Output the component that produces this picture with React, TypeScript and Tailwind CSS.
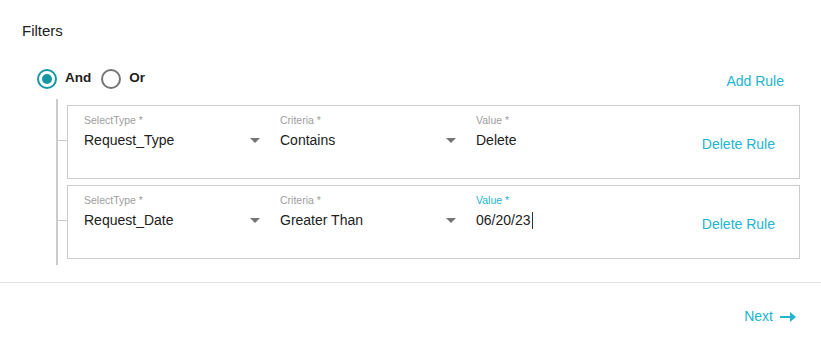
import { ReactNode } from "react";

const font = { fontFamily: '"Liberation Sans", Arial, sans-serif' };

function Radio({ checked, label }: { checked?: boolean; label: string }) {
  return (
    <label className="flex items-center gap-[8px]">
      <span
        className={`w-[20px] h-[20px] rounded-full border-2 flex items-center justify-center ${
          checked ? "border-[#1497a3]" : "border-[#757575]"
        }`}
      >
        {checked && <span className="w-[10px] h-[10px] rounded-full bg-[#1497a3]" />}
      </span>
      <span className="text-[13.5px] font-bold text-[#212121]">{label}</span>
    </label>
  );
}

function Field({
  label,
  value,
  select,
  focused,
  children,
}: {
  label: string;
  value: string;
  select?: boolean;
  focused?: boolean;
  children?: ReactNode;
}) {
  return (
    <div className="w-[176px] flex flex-col">
      <span className={`text-[10.5px] leading-[13px] ${focused ? "text-[#22b5cf]" : "text-[#9e9e9e]"}`}>
        {label}
      </span>
      <div className="mt-[3px] h-[20px] flex items-center justify-between">
        <span className="text-[14px] text-[#212121] flex items-center">
          {value}
          {children}
        </span>
        {select && (
          <span className="w-0 h-0 border-l-[5px] border-r-[5px] border-t-[5px] border-l-transparent border-r-transparent border-t-[#757575]" />
        )}
      </div>
    </div>
  );
}

function RuleCard({
  type,
  criteria,
  value,
  focused,
}: {
  type: string;
  criteria: string;
  value: string;
  focused?: boolean;
}) {
  return (
    <div className="relative h-[74px] border border-[#cccccc] flex pl-[16px] pr-[24px] pt-[8px]">
      <span className="absolute left-[-10px] top-[34px] w-[9px] h-[1px] bg-[#cccccc]" />
      <div className="flex gap-[20px]">
        <Field label="SelectType *" value={type} select />
        <Field label="Criteria *" value={criteria} select />
        <Field label="Value *" value={value} focused={focused}>
          {focused && <span className="ml-[1px] w-[1px] h-[17px] bg-[#333333]" />}
        </Field>
      </div>
      <button className="ml-auto mt-[20px] self-start text-[14px] text-[#22b5cf]">Delete Rule</button>
    </div>
  );
}

export default function App() {
  return (
    <div className="w-[821px] h-[346px] bg-white flex flex-col" style={font}>
      <div className="pl-[22px] pr-[21px]">
        <h2 className="pt-[22px] text-[15px] leading-[18px] text-[#212121]">Filters</h2>

        <div className="mt-[25px] pl-[15px] flex items-center">
          <div className="flex items-center gap-[10px]">
            <Radio checked label="And" />
            <Radio label="Or" />
          </div>
          <button className="ml-auto mr-[16px] mt-[6px] text-[14px] text-[#22b5cf]">Add Rule</button>
        </div>

        <div className="mt-[7px] ml-[34px] border-l-2 border-[#cccccc] pl-[9px] py-[6px] flex flex-col gap-[6px]">
          <RuleCard type="Request_Type" criteria="Contains" value="Delete" />
          <RuleCard type="Request_Date" criteria="Greater Than" value="06/20/23" focused />
        </div>
      </div>

      <div className="mt-[17px] border-t border-[#e0e0e0]" />

      <div className="flex justify-end pr-[25px] pt-[23px]">
        <button className="flex items-center gap-[7px] text-[14px] text-[#22b5cf]">
          Next
          <svg width="16" height="10" viewBox="0 0 16 10">
            <rect x="0" y="4" width="11" height="2" fill="#22b5cf" />
            <path d="M10 0 L16 5 L10 10 Z" fill="#22b5cf" />
          </svg>
        </button>
      </div>
    </div>
  );
}
